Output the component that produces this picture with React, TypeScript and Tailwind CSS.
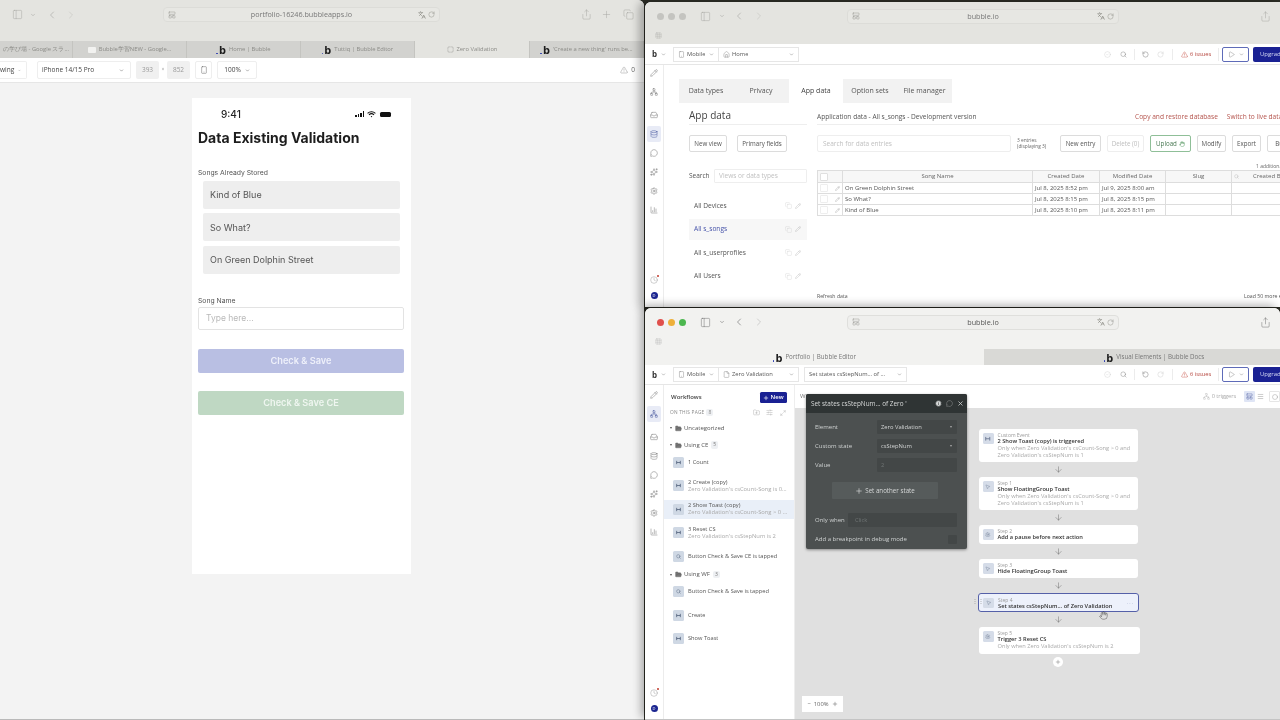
import type { ComponentType, ReactNode } from "react";
import {
  ArrowDown,
  BarChart3,
  ChevronDown,
  ChevronLeft,
  ChevronRight,
  Circle,
  CircleCheck,
  Clock,
  Copy,
  Database,
  File,
  FolderOpen,
  FolderPlus,
  Hand,
  House,
  Info,
  Inbox,
  LayoutPanelTop,
  Maximize2,
  MessageCircle,
  Menu,
  Network,
  PanelLeft,
  Pencil,
  Play,
  Plus,
  RotateCcw,
  RotateCw,
  Search,
  Settings,
  Share,
  SlidersHorizontal,
  Smartphone,
  Sparkles,
  SquareDashed,
  TriangleAlert,
  MousePointer2,
  X,
  Grid3x3,
  Languages,
  type LucideIcon,
} from "lucide-react";

type GlyphProps = { size?: number; strokeWidth?: number };

function EventGlyph({ size = 6 }: GlyphProps) {
  return (
    <svg width={size} height={size} viewBox="0 0 6 6" fill="none" stroke="currentColor" strokeWidth="1">
      <path d="M.8 1v4M5.2 1v4M.8 3h4.4" />
    </svg>
  );
}

function BLogo({ size = 11 }: { size?: number }) {
  return (
    <span className="inline-flex items-end leading-none">
      <span className="mb-[1px] mr-[1px] h-[1.5px] w-[1.5px] rounded-full bg-[#2b3bb0]" />
      <span className="font-bold text-[#1c1c1c]" style={{ fontSize: size }}>
        b
      </span>
    </span>
  );
}

function UrlBar({ url, width, tone }: { url: string; width: number; tone: "idle" | "focus" }) {
  return (
    <div
      className={`flex h-[15px] items-center rounded-[4px] border px-[4px] ${
        tone === "focus" ? "border-[#dfdfdc] bg-[#efefed]" : "border-[#dcdcd8] bg-[#e7e7e3]"
      }`}
      style={{ width }}
    >
      <div className="w-[20px]">
        <LayoutPanelTop size={8} className="text-[#8a8a86]" strokeWidth={1.25} />
      </div>
      <span className={`flex-1 text-center text-[7.2px] ${tone === "focus" ? "text-[#555]" : "text-[#777]"}`}>{url}</span>
      <div className="flex w-[20px] items-center justify-end gap-[2px] text-[#77776f]">
        <Languages size={8} strokeWidth={1.5} />
        <RotateCw size={7} strokeWidth={1.25} />
      </div>
    </div>
  );
}

function SideRail({ active, top, bottom }: { active: number; top: number; bottom: number }) {
  const icons: LucideIcon[] = [Pencil, Network, Inbox, Database, MessageCircle, Sparkles, Settings, BarChart3];
  return (
    <div
      className="flex w-[19px] shrink-0 flex-col items-center justify-between border-r border-[#ececec] bg-white"
      style={{ paddingTop: top, paddingBottom: bottom }}
    >
      <div className="flex flex-col items-center">
        {icons.map((Icon, i) => (
          <div
            key={i}
            className={`flex h-[16px] w-[14px] items-center justify-center rounded-[2px] ${
              i === active ? "bg-[#e8ebf6] text-[#3f4f9a]" : "text-[#6b6b6b]"
            } ${i === 1 ? "mb-[7px]" : "mb-[3px]"}`}
          >
            <Icon size={8} strokeWidth={1.4} />
          </div>
        ))}
      </div>
      <div className="flex flex-col items-center gap-[8px]">
        <div className="relative text-[#8b8b8b]">
          <Clock size={8} strokeWidth={1.2} />
          <span className="absolute right-[-1px] top-[-1px] h-[2px] w-[2px] rounded-full bg-[#c0392b]" />
        </div>
        <div className="flex h-[7px] w-[7px] items-center justify-center rounded-full bg-[#1b2590] text-[4px] text-white">
          D
        </div>
      </div>
    </div>
  );
}

function EditorTopBar({ children, height }: { children: ReactNode; height: number }) {
  return (
    <div
      className="flex shrink-0 items-center border-b border-[#e6e6e6] bg-white pl-[7px]"
      style={{ height }}
    >
      <span className="w-[9px] text-[8px] font-bold text-[#333]">b</span>
      <ChevronDown size={5} className="text-[#666]" />
      <div className="ml-[7px] flex min-w-0 items-center">{children}</div>
      <div className="ml-auto flex shrink-0 items-center text-[#a0a0a0]">
        <CircleCheck size={7} strokeWidth={1.2} className="text-[#c9c9c9]" />
        <Search size={7} strokeWidth={1.4} className="ml-[9px] text-[#777]" />
        <div className="ml-[7px] h-[11px] w-px bg-[#ececec]" />
        <RotateCcw size={7} strokeWidth={1.4} className="ml-[7px] text-[#666]" />
        <RotateCw size={7} strokeWidth={1.4} className="ml-[8px] text-[#c9c9c9]" />
        <div className="ml-[8px] h-[11px] w-px bg-[#ececec]" />
        <TriangleAlert size={7} strokeWidth={1.3} className="ml-[8px] text-[#c0392b]" />
        <span className="ml-[2px] w-[23px] text-[5.8px] text-[#b4433b]">6 issues</span>
        <div className="ml-[5px] h-[13px] w-px bg-[#ececec]" />
        <div className="ml-[3px] flex h-[15px] w-[27px] items-center justify-center gap-[4px] rounded-[2px] border border-[#5e6bb8] text-[#666]">
          <Play size={7} strokeWidth={1.2} />
          <ChevronDown size={5} />
        </div>
        <div className="ml-[4px] flex h-[15px] w-[27px] items-center overflow-hidden whitespace-nowrap rounded-l-[2px] bg-[#1a2193] pl-[7px] text-[6px] font-medium text-[#d6daf5]">
          Upgrade
        </div>
      </div>
    </div>
  );
}

function SelectBox({ icon: Icon, label, width }: { icon?: LucideIcon; label: string; width: number }) {
  return (
    <div
      className="flex h-[15px] items-center border-y border-r border-[#e6e6e6] px-[4px] first:border-l"
      style={{ width }}
    >
      {Icon ? <Icon size={7} strokeWidth={1.2} className="mr-[2px] shrink-0 text-[#666]" /> : null}
      <span className="truncate text-[5.8px] text-[#555]">{label}</span>
      <ChevronDown size={5} className="ml-auto shrink-0 text-[#666]" />
    </div>
  );
}

function PreviewWindow() {
  const tabs = [
    { label: "の学び場 - Google スラ…", x: 73, kind: "none" },
    { label: "Bubble学習NEW - Google…", x: 114, kind: "sheet" },
    { label: "Home | Bubble", x: 114, kind: "b" },
    { label: "Tuttiq | Bubble Editor", x: 114, kind: "b" },
    { label: "Zero Validation", x: 115, kind: "active" },
    { label: "'Create a new thing' runs be…", x: 114, kind: "b" },
  ];
  return (
    <div className="absolute left-0 top-0 flex h-[720px] w-[644px] flex-col overflow-hidden rounded-tr-[6px] border-b border-[#b9b9b9] bg-[#f3f3f3]">
      <div className="flex h-[29px] shrink-0 items-center bg-[#e4e4e0] pl-[12px] text-[#a3a39f]">
        <PanelLeft size={11} strokeWidth={1} />
        <ChevronDown size={6} className="ml-[7px]" />
        <ChevronLeft size={12} strokeWidth={1.2} className="ml-[10px]" />
        <ChevronRight size={12} strokeWidth={1.2} className="ml-[7px] text-[#c4c4c0]" />
        <div className="ml-[86px]">
          <UrlBar url="portfolio-16246.bubbleapps.io" width={277} tone="idle" />
        </div>
        <Share size={11} strokeWidth={1} className="ml-[141px]" />
        <Plus size={11} strokeWidth={1} className="ml-[9px]" />
        <Copy size={11} strokeWidth={1} className="ml-[11px]" />
      </div>
      <div className="h-[12px] shrink-0 bg-[#e4e4e0]" />
      <div className="flex h-[17px] shrink-0 bg-[#e4e4e0]">
        {tabs.map((t) => (
          <div
            key={t.label}
            className={`flex h-full items-center justify-center gap-[3px] overflow-hidden border-r border-[#c4c4c0] ${
              t.kind === "active" ? "bg-[#e4e4e0]" : "bg-[#d2d2cf]"
            }`}
            style={{ width: t.x }}
          >
            {t.kind === "sheet" ? <span className="h-[6px] w-[8px] rounded-[1px] bg-[#f2f2f0]" /> : null}
            {t.kind === "active" ? <SquareDashed size={7} className="text-[#9a9a96]" /> : null}
            {t.kind === "b" ? <BLogo size={11} /> : null}
            <span className="whitespace-nowrap text-[5.8px] text-[#8b8b87]">{t.label}</span>
          </div>
        ))}
      </div>
      <div className="flex h-[25px] shrink-0 items-center border-b border-[#e6e6e6] bg-white text-[#444]">
        <div className="flex h-[18px] w-[27px] items-center justify-end gap-[4px] rounded-r-[2px] border border-l-0 border-[#eeeeee] pr-[5px] text-[6.5px]">
          wing
          <ChevronDown size={5} />
        </div>
        <div className="ml-[10px] flex h-[18px] w-[94px] items-center justify-between rounded-[2px] border border-[#eeeeee] pl-[4px] pr-[6px] text-[6.5px]">
          iPhone 14/15 Pro
          <ChevronDown size={5} />
        </div>
        <div className="ml-[5px] flex h-[18px] w-[23px] items-center justify-center rounded-[2px] bg-[#f0f0f0] text-[6.5px] text-[#999]">
          393
        </div>
        <span className="w-[8px] text-center text-[5px] text-[#999]">×</span>
        <div className="flex h-[18px] w-[23px] items-center justify-center rounded-[2px] bg-[#f0f0f0] text-[6.5px] text-[#999]">
          852
        </div>
        <div className="ml-[5px] flex h-[18px] w-[17px] items-center justify-center rounded-[2px] border border-[#eeeeee]">
          <Smartphone size={8} strokeWidth={1.2} />
        </div>
        <div className="ml-[5px] flex h-[18px] w-[40px] items-center justify-center gap-[4px] rounded-[2px] border border-[#eeeeee] text-[6.5px]">
          100%
          <ChevronDown size={5} />
        </div>
        <TriangleAlert size={8} strokeWidth={1} className="ml-auto text-[#666]" />
        <span className="ml-[3px] mr-[9px] text-[6.5px] text-[#666]">0</span>
      </div>
      <div className="flex flex-1 pl-[192px] pt-[15px]">
        <PhoneScreen />
      </div>
    </div>
  );
}

function PhoneScreen() {
  const songs = ["Kind of Blue", "So What?", "On Green Dolphin Street"];
  return (
    <div className="flex h-[476px] w-[219px] flex-col bg-white pl-[6px] pr-[7px] font-['Inter',sans-serif] text-[#222]">
      <div className="flex h-[32px] shrink-0 items-center justify-between pl-[23px] pr-[13px]">
        <span className="text-[10px] font-medium">9:41</span>
        <div className="flex items-center gap-[3px] text-[#111]">
          <div className="flex items-end gap-[1px]">
            <span className="h-[2px] w-[1.5px] bg-[#111]" />
            <span className="h-[3px] w-[1.5px] bg-[#111]" />
            <span className="h-[4.5px] w-[1.5px] bg-[#111]" />
            <span className="h-[6px] w-[1.5px] bg-[#111]" />
          </div>
          <svg width="9" height="7" viewBox="0 0 9 7" fill="none" stroke="#111" strokeWidth="1.1">
            <path d="M.6 2.4a5.6 5.6 0 0 1 7.8 0M2 3.9a3.6 3.6 0 0 1 5 0" />
            <circle cx="4.5" cy="5.6" r=".7" fill="#111" stroke="none" />
          </svg>
          <span className="ml-[1px] h-[5px] w-[11px] rounded-[1.5px] bg-[#111]" />
        </div>
      </div>
      <h1 className="text-[14px] font-bold leading-[16px] text-[#1d1d1d]">Data Existing Validation</h1>
      <div className="mt-[23px] h-[8px] text-[6.8px] leading-[8px] text-[#555]">Songs Already Stored</div>
      <div className="mt-[4px] flex flex-col gap-[4.4px] pl-[5px] pr-[4px]">
        {songs.map((s) => (
          <div key={s} className="flex h-[28px] items-center rounded-[2px] bg-[#eeeeee] pl-[7px] pr-[2px] text-[9px] text-[#555]">
            {s}
          </div>
        ))}
      </div>
      <div className="mt-[23px] h-[8px] text-[6.8px] leading-[8px] text-[#555]">Song Name</div>
      <div className="mt-[2px] flex h-[23px] shrink-0 items-center rounded-[2px] border border-[#e3e3e3] pl-[7px] text-[8.5px] text-[#b9b9b9]">
        Type here...
      </div>
      <button type="button" className="mt-[19px] h-[24px] shrink-0 rounded-[2px] bg-[#b9bfe3] text-[9.2px] font-semibold text-[#eef0fa]">
        Check &amp; Save
      </button>
      <button type="button" className="mt-[18px] h-[24px] shrink-0 rounded-[2px] bg-[#bfd8c3] text-[9.2px] font-semibold text-[#eff6f0]">
        Check &amp; Save CE
      </button>
    </div>
  );
}

function ActionButton({ children, width, tone = "normal" }: { children: ReactNode; width: number; tone?: "normal" | "muted" | "green" }) {
  const cls =
    tone === "green"
      ? "border-[#8fbf98] text-[#4b7a55]"
      : tone === "muted"
        ? "border-[#eeeeee] text-[#bdbdbd]"
        : "border-[#dcdcdc] text-[#555]";
  return (
    <div
      className={`flex h-[17px] shrink-0 items-center justify-center gap-[2px] whitespace-nowrap rounded-[2px] border text-[6.2px] ${cls}`}
      style={{ width }}
    >
      {children}
    </div>
  );
}

function AppDataWindow() {
  const tabs = [
    { label: "Data types", w: 54 },
    { label: "Privacy", w: 56 },
    { label: "App data", w: 54, active: true },
    { label: "Option sets", w: 54 },
    { label: "File manager", w: 55 },
  ];
  const views = ["All Devices", "All s_songs", "All s_userprofiles", "All Users"];
  const rows = [
    ["On Green Dolphin Street", "Jul 8, 2025 8:52 pm", "Jul 9, 2025 8:00 am"],
    ["So What?", "Jul 8, 2025 8:15 pm", "Jul 8, 2025 8:15 pm"],
    ["Kind of Blue", "Jul 8, 2025 8:10 pm", "Jul 8, 2025 8:11 pm"],
  ];
  return (
    <div className="absolute left-[645px] top-[2px] flex h-[305px] w-[635px] flex-col overflow-hidden rounded-tl-[6px] bg-white shadow-[-6px_0_9px_rgba(0,0,0,0.28)]">
      <div className="flex h-[28px] shrink-0 items-center bg-[#e4e4e0] pl-[12px] text-[#a3a39f]">
        <div className="flex gap-[4px]">
          <span className="h-[7px] w-[7px] rounded-full bg-[#c4c4c0]" />
          <span className="h-[7px] w-[7px] rounded-full bg-[#c4c4c0]" />
          <span className="h-[7px] w-[7px] rounded-full bg-[#c4c4c0]" />
        </div>
        <PanelLeft size={11} strokeWidth={1} className="ml-[14px]" />
        <ChevronDown size={6} className="ml-[8px]" />
        <ChevronLeft size={12} strokeWidth={1.2} className="ml-[8px]" />
        <ChevronRight size={12} strokeWidth={1.2} className="ml-[8px] text-[#c4c4c0]" />
        <div className="ml-[82px]">
          <UrlBar url="bubble.io" width={272} tone="idle" />
        </div>
        <Share size={11} strokeWidth={1} className="ml-[141px]" />
      </div>
      <div className="flex h-[14px] shrink-0 items-center bg-[#e4e4e0] pb-[4px] pl-[10px] text-[#a3a39f]">
        <Grid3x3 size={7} strokeWidth={1} />
      </div>
      <EditorTopBar height={21}>
        <SelectBox icon={Smartphone} label="Mobile" width={46} />
        <SelectBox icon={House} label="Home" width={80} />
      </EditorTopBar>
      <div className="flex min-h-0 flex-1">
        <SideRail active={3} top={0} bottom={8} />
        <div className="min-w-0 flex-1 pl-[15px] pt-[14px] text-[#555]">
          <div className="flex h-[24px] w-[273px] bg-[#f2f2f2]">
            {tabs.map((t) => (
              <div
                key={t.label}
                className={`flex items-center justify-center text-[7px] ${t.active ? "bg-white text-[#444]" : "text-[#555]"}`}
                style={{ width: t.w }}
              >
                {t.label}
              </div>
            ))}
          </div>
          <div className="flex pl-[10px]">
            <div className="w-[118px] shrink-0">
              <div className="flex h-[22px] items-center border-b border-[#eeeeee] pt-[4px] text-[10px] text-[#444]">App data</div>
              <div className="mt-[10px] flex gap-[10px]">
                <ActionButton width={38}>New view</ActionButton>
                <ActionButton width={50}>Primary fields</ActionButton>
              </div>
              <div className="mt-[17px] flex h-[14px] items-center">
                <span className="w-[25px] text-[6.5px]">Search</span>
                <div className="flex h-full flex-1 items-center rounded-[1px] border border-[#eeeeee] pl-[4px] text-[6.5px] text-[#c0c0c0]">
                  Views or data types
                </div>
              </div>
              <div className="mt-[12px] flex flex-col gap-[2.6px]">
                {views.map((v, i) => (
                  <div
                    key={v}
                    className={`flex h-[21px] items-center justify-between pl-[5px] pr-[6px] text-[6.6px] ${
                      i === 1 ? "bg-[#f7f7f7] text-[#4451a8]" : "text-[#555]"
                    }`}
                  >
                    {v}
                    <div className="flex items-center gap-[3px] text-[#c9c9c9]">
                      <Copy size={7} strokeWidth={1.1} />
                      <Pencil size={6} strokeWidth={1.3} className="text-[#aaa]" />
                    </div>
                  </div>
                ))}
              </div>
            </div>
            <div className="ml-[10px] w-[480px] shrink-0">
              <div className="flex h-[22px] items-center whitespace-nowrap border-b border-[#eeeeee] pt-[6px] text-[6.6px]">
                <span className="w-[318px]">Application data - All s_songs - Development version</span>
                <span className="text-[#b4534c]">Copy and restore database</span>
                <span className="ml-[9px] text-[#b4534c]">Switch to live data</span>
              </div>
              <div className="mt-[10px] flex items-center">
                <div className="flex h-[17px] w-[194px] shrink-0 items-center rounded-[2px] border border-[#eeeeee] pl-[5px] text-[6.5px] text-[#c0c0c0]">
                  Search for data entries
                </div>
                <div className="ml-[6px] w-[43px] shrink-0 text-[4.8px] leading-[5.5px] text-[#666]">
                  3 entries
                  <br />
                  (displaying 3)
                </div>
                <ActionButton width={41}>New entry</ActionButton>
                <div className="ml-[6px]">
                  <ActionButton width={37} tone="muted">Delete (0)</ActionButton>
                </div>
                <div className="ml-[6px]">
                  <ActionButton width={41} tone="green">
                    Upload
                    <Hand size={6} strokeWidth={1.6} className="text-[#3f8a4c]" />
                  </ActionButton>
                </div>
                <div className="ml-[6px]">
                  <ActionButton width={29}>Modify</ActionButton>
                </div>
                <div className="ml-[6px]">
                  <ActionButton width={29}>Export</ActionButton>
                </div>
                <div className="ml-[6px]">
                  <ActionButton width={29}>Bulk</ActionButton>
                </div>
              </div>
              <div className="h-[18px] whitespace-nowrap pl-[439px] pt-[11px] text-[5px] leading-[6px] text-[#666]">1 additional</div>
              <div className="border border-[#dddddd] text-[6px]">
                <div className="grid h-[11px] grid-cols-[24px_190px_67px_66px_66px_1fr] bg-[#f7f7f7] text-center leading-[11px] text-[#666]">
                  <div className="flex items-center pl-[2px]">
                    <span className="h-[8px] w-[8px] rounded-[1px] border border-[#e0e0e0] bg-white" />
                  </div>
                  <div className="border-l border-[#dddddd]">Song Name</div>
                  <div className="border-l border-[#dddddd]">Created Date</div>
                  <div className="border-l border-[#dddddd]">Modified Date</div>
                  <div className="border-l border-[#dddddd]">Slug</div>
                  <div className="flex items-center border-l border-[#dddddd] pl-[2px]">
                    <Search size={5} className="text-[#bbb]" />
                    <span className="ml-[14px]">Created By</span>
                  </div>
                </div>
                {rows.map((r) => (
                  <div key={r[0]} className="grid h-[11px] grid-cols-[24px_190px_67px_66px_66px_1fr] border-t border-[#dddddd] leading-[10px] text-[#555]">
                    <div className="flex items-center justify-between px-[2px]">
                      <span className="h-[8px] w-[8px] rounded-[1px] border border-[#eeeeee] bg-white" />
                      <Pencil size={5} className="text-[#aaa]" />
                    </div>
                    <div className="border-l border-[#dddddd] pl-[2px]">{r[0]}</div>
                    <div className="border-l border-[#dddddd] pl-[2px]">{r[1]}</div>
                    <div className="border-l border-[#dddddd] pl-[2px]">{r[2]}</div>
                    <div className="border-l border-[#dddddd]" />
                    <div className="border-l border-[#dddddd]" />
                  </div>
                ))}
              </div>
              <div className="mt-[76px] flex h-[10px] items-center whitespace-nowrap text-[5.2px] text-[#555]">
                <span className="w-[427px]">Refresh data</span>
                <span>Load 50 more entries</span>
              </div>
            </div>
          </div>
        </div>
      </div>
    </div>
  );
}

function TreeFolder({ label, count, top }: { label: string; count?: number; top: number }) {
  return (
    <div className="flex h-[12px] items-center pl-[6px]" style={{ marginTop: top }}>
      <span className="h-0 w-0 border-x-[1.5px] border-t-[2px] border-x-transparent border-t-[#555]" />
      <FolderOpen size={7} strokeWidth={1.2} fill="#777" className="ml-[3px] text-[#555]" />
      <span className="ml-[2px] text-[6px] font-medium text-[#555]">{label}</span>
      {count ? <span className="ml-[3px] rounded-[2px] bg-[#eef0f3] px-[2px] text-[5px] text-[#777]">{count}</span> : null}
    </div>
  );
}

function TreeRow({ title, sub, icon = "event", selected }: { title: string; sub?: string; icon?: "event" | "search"; selected?: boolean }) {
  return (
    <div className={`mb-[4.5px] flex h-[19px] items-center pl-[9px] ${selected ? "bg-[#e9eff8]" : ""}`}>
      <div className="flex h-[11px] w-[11px] shrink-0 items-center justify-center rounded-[1.5px] bg-[#cfd8e4] text-[#56657e]">
        {icon === "search" ? <Search size={5} strokeWidth={2} /> : <EventGlyph size={5} />}
      </div>
      <div className="ml-[4px] min-w-0 leading-[7px]">
        <div className="truncate text-[5.7px] font-medium text-[#555]">{title}</div>
        {sub ? <div className="truncate text-[5.8px] text-[#a9a9a9]">{sub}</div> : null}
      </div>
    </div>
  );
}

function StepCard({
  eyebrow,
  title,
  lines,
  icon,
  selected,
  wide,
  height,
}: {
  eyebrow: string;
  title: string;
  lines?: string[];
  icon: ComponentType<GlyphProps>;
  selected?: boolean;
  wide?: boolean;
  height: number;
}) {
  const Icon = icon;
  return (
    <div
      className={`flex shrink-0 rounded-[3px] pl-[4px] pt-[4px] ${wide ? "w-[161px]" : "w-[159.5px]"} ${
        selected ? "-ml-[0.5px] border border-[#5560a8] bg-[#edf1fb]" : "bg-white"
      }`}
      style={{ height }}
    >
      <div className="flex h-[10.5px] w-[11px] shrink-0 items-center justify-center rounded-[1.5px] bg-[#d5dce8] text-[#6c7a93]">
        <Icon size={5.5} strokeWidth={1.5} />
      </div>
      <div className="ml-[4px] min-w-0 flex-1 leading-[7px]">
        <div className="text-[5px] leading-[5px] text-[#9a9a9a]">{eyebrow}</div>
        <div className="whitespace-nowrap text-[5.7px] font-semibold leading-[6.5px] text-[#333]">{title}</div>
        {lines?.map((l) => (
          <div key={l} className="whitespace-nowrap text-[5.7px] text-[#aaaaaa]">
            {l}
          </div>
        ))}
      </div>
      {selected ? <span className="mr-[4px] mt-[2px] text-[5px] tracking-[1px] text-[#9aa3c5]">···</span> : null}
    </div>
  );
}

function StepArrow({ height = 15 }: { height?: number }) {
  return (
    <div className="flex w-[159.5px] shrink-0 items-center justify-center text-[#555]" style={{ height }}>
      <ArrowDown size={9} strokeWidth={1.1} />
    </div>
  );
}

function DarkField({ label, value, faded }: { label: string; value: string; faded?: boolean }) {
  return (
    <div className="mb-[5px] flex h-[14px] items-center pl-[9px] pr-[10px]">
      <span className="w-[62px] text-[6px] text-[#cfd2d2]">{label}</span>
      <div className="flex h-full flex-1 items-center justify-between rounded-[1px] bg-[#434747] pl-[4px] pr-[5px]">
        <span className={`text-[5.8px] ${faded ? "text-[#6f7474]" : "text-[#d4d6d6]"}`}>{value}</span>
        {faded ? null : <span className="h-0 w-0 border-x-[1.5px] border-t-[2px] border-x-transparent border-t-[#aaa]" />}
      </div>
    </div>
  );
}

function WorkflowWindow() {
  return (
    <div className="absolute left-[645px] top-[308px] flex h-[412px] w-[635px] flex-col overflow-hidden rounded-t-[6px] border-b border-[#c4c4c4] bg-white shadow-[-4px_-3px_8px_rgba(0,0,0,0.3)]">
      <div className="flex h-[28px] shrink-0 items-center bg-[#f2f2f0] pl-[12px] text-[#666]">
        <div className="flex gap-[4px]">
          <span className="h-[7px] w-[7px] rounded-full bg-[#e0504c]" />
          <span className="h-[7px] w-[7px] rounded-full bg-[#eeb03a]" />
          <span className="h-[7px] w-[7px] rounded-full bg-[#4cb74f]" />
        </div>
        <PanelLeft size={11} strokeWidth={1} className="ml-[14px]" />
        <ChevronDown size={6} className="ml-[8px]" />
        <ChevronLeft size={12} strokeWidth={1.2} className="ml-[8px]" />
        <ChevronRight size={12} strokeWidth={1.2} className="ml-[8px] text-[#b5b5b5]" />
        <div className="ml-[82px]">
          <UrlBar url="bubble.io" width={272} tone="focus" />
        </div>
        <Share size={11} strokeWidth={1} className="ml-[141px]" />
      </div>
      <div className="flex h-[13px] shrink-0 items-center bg-[#f2f2f0] pb-[2px] pl-[10px] text-[#aaa]">
        <Grid3x3 size={7} strokeWidth={1} />
      </div>
      <div className="flex h-[16px] shrink-0 overflow-hidden">
        <div className="flex w-[339px] shrink-0 items-center justify-center gap-[3px] bg-[#f2f2f0]">
          <BLogo size={11} />
          <span className="text-[6.2px] text-[#777]">Portfolio | Bubble Editor</span>
        </div>
        <div className="flex w-[340px] shrink-0 items-center justify-center gap-[3px] bg-[#d9d9d6]">
          <BLogo size={11} />
          <span className="text-[6.2px] text-[#777]">Visual Elements | Bubble Docs</span>
        </div>
      </div>
      <EditorTopBar height={20}>
        <SelectBox icon={Smartphone} label="Mobile" width={46} />
        <SelectBox icon={File} label="Zero Validation" width={80} />
        <div className="ml-[5px]">
          <SelectBox label="Set states csStepNum... of ..." width={103} />
        </div>
      </EditorTopBar>
      <div className="relative flex min-h-0 flex-1">
        <SideRail active={1} top={2} bottom={7} />
        <div className="w-[131px] shrink-0 border-r border-[#eeeeee] bg-white">
          <div className="flex items-center pl-[7px] pr-[7px] pt-[7px]">
            <span className="text-[6px] font-semibold text-[#444]">Workflows</span>
            <div className="ml-auto flex h-[11px] w-[27px] items-center justify-center gap-[1px] rounded-[1.5px] bg-[#1a2193] text-[6px] font-semibold text-white">
              <Plus size={6} strokeWidth={2.5} />
              New
            </div>
          </div>
          <div className="mt-[4px] flex h-[11px] items-center pl-[6px] pr-[8px] text-[#8a8a8a]">
            <span className="text-[4.8px] tracking-[0.2px]">ON THIS PAGE</span>
            <span className="ml-[2px] rounded-[2px] bg-[#eef0f3] px-[2px] text-[5px]">8</span>
            <FolderPlus size={7} strokeWidth={1.1} className="ml-auto" />
            <SlidersHorizontal size={7} strokeWidth={1.1} className="ml-[6px]" />
            <Maximize2 size={6} strokeWidth={1.1} className="ml-[7px]" />
          </div>
          <TreeFolder label="Uncategorized" top={4} />
          <TreeFolder label="Using CE" count={5} top={5} />
          <div className="mt-[1.5px]">
            <TreeRow title="1 Count" />
            <TreeRow title="2 Create (copy)" sub="Zero Validation's csCount-Song is 0..." />
            <TreeRow title="2 Show Toast (copy)" sub="Zero Validation's csCount-Song > 0 ..." selected />
            <TreeRow title="3 Reset CS" sub="Zero Validation's csStepNum is 2" />
            <div className="-mb-[1.5px]">
              <TreeRow title="Button Check & Save CE is tapped" icon="search" />
            </div>
          </div>
          <TreeFolder label="Using WF" count={3} top={0} />
          <div className="mt-[1.5px]">
            <TreeRow title="Button Check & Save is tapped" icon="search" />
            <TreeRow title="Create" />
            <TreeRow title="Show Toast" />
          </div>
        </div>
        <div className="flex min-w-0 flex-1 flex-col">
          <div className="flex h-[23px] shrink-0 items-center whitespace-nowrap bg-white pl-[5px] text-[#a9a9a9]">
            <span className="w-[6px] text-[6px] text-[#777]">W</span>
            <Network size={7} strokeWidth={1.1} className="ml-[397px] shrink-0" />
            <span className="ml-[2px] w-[27px] text-[5.6px]">0 triggers</span>
            <div className="ml-[7px] flex h-[11px] w-[11px] shrink-0 items-center justify-center rounded-[1px] bg-[#dfe5f5] text-[#3f4f9a]">
              <LayoutPanelTop size={7} strokeWidth={1.3} />
            </div>
            <Menu size={7} strokeWidth={1.3} className="ml-[2px] shrink-0 text-[#777]" />
            <div className="ml-[5px] flex h-[11px] w-[11px] shrink-0 items-center justify-center rounded-[1px] border border-[#e6e6e6] text-[#777]">
              <Circle size={6} strokeWidth={1.3} />
            </div>
          </div>
          <div className="flex min-h-0 flex-1 flex-col bg-[#e0e0e0] pl-[183.5px] pt-[21px]">
            <StepCard
              height={33}
              icon={EventGlyph}
              eyebrow="Custom Event"
              title="2 Show Toast (copy) is triggered"
              lines={["Only when Zero Validation's csCount-Song > 0 and", "Zero Validation's csStepNum is 1"]}
            />
            <StepArrow />
            <StepCard
              height={33}
              icon={MousePointer2}
              eyebrow="Step 1"
              title="Show FloatingGroup Toast"
              lines={["Only when Zero Validation's csCount-Song > 0 and", "Zero Validation's csStepNum is 1"]}
            />
            <StepArrow />
            <StepCard height={19} icon={Settings} eyebrow="Step 2" title="Add a pause before next action" />
            <StepArrow />
            <StepCard height={19} icon={MousePointer2} eyebrow="Step 3" title="Hide FloatingGroup Toast" />
            <StepArrow height={14.5} />
            <StepCard height={19.5} selected wide icon={MousePointer2} eyebrow="Step 4" title="Set states csStepNum... of Zero Validation" />
            <StepArrow />
            <StepCard
              height={27}
              wide
              icon={Settings}
              eyebrow="Step 5"
              title="Trigger 3 Reset CS"
              lines={["Only when Zero Validation's csStepNum is 2"]}
            />
            <div className="mt-[3px] flex w-[159.5px] justify-center">
              <div className="flex h-[10px] w-[10px] items-center justify-center rounded-full bg-white text-[#555]">
                <Plus size={6} strokeWidth={1.5} />
              </div>
            </div>
          </div>
        </div>

        {/* floating property editor */}
        <div className="absolute left-[161px] top-[9px] h-[155px] w-[161px] rounded-[2px] bg-[#4c5050] shadow-[0_1px_3px_rgba(0,0,0,0.4)]">
          <div className="flex h-[19px] items-center rounded-t-[2px] bg-[#2f3434] pl-[5px] pr-[3px] text-[#d8dada]">
            <span className="text-[6.4px]">Set states csStepNum... of Zero '</span>
            <Info size={7} fill="#d8dada" stroke="#2f3434" className="ml-auto" />
            <MessageCircle size={7} strokeWidth={1} className="ml-[4px]" />
            <X size={7} strokeWidth={2.5} className="ml-[4px]" />
          </div>
          <div className="pt-[7px]">
            <DarkField label="Element" value="Zero Validation" />
            <DarkField label="Custom state" value="csStepNum" />
            <DarkField label="Value" value="2" faded />
          </div>
          <div className="ml-[26px] mt-[10px] flex h-[17px] w-[106px] items-center justify-center gap-[2px] rounded-[1px] bg-[#565b5b] text-[6.2px] text-[#d4d6d6]">
            <Plus size={8} strokeWidth={2} />
            Set another state
          </div>
          <div className="mt-[14px] flex h-[14px] items-center pl-[9px] pr-[10px]">
            <span className="w-[33px] text-[6px] text-[#cfd2d2]">Only when</span>
            <div className="flex h-full flex-1 items-center rounded-[1px] bg-[#434747] pl-[7px] text-[5.8px] text-[#6f7474]">Click</div>
          </div>
          <div className="mt-[5px] flex h-[14px] items-center pl-[9px] pr-[10px]">
            <span className="text-[6px] text-[#cfd2d2]">Add a breakpoint in debug mode</span>
            <span className="ml-auto h-[9px] w-[9px] rounded-[1px] bg-[#434747]" />
          </div>
        </div>

        <div className="absolute bottom-[7px] left-[157px] flex h-[16px] w-[41px] items-center justify-center gap-[3px] bg-white text-[5.8px] text-[#666]">
          <span>−</span>
          <span>100%</span>
          <Plus size={6} />
        </div>
        <div className="absolute left-[327px] top-[215px] text-[6px] leading-[3px] text-[#999]">⋮⋮</div>
        <Hand size={9} strokeWidth={1.1} className="absolute left-[454px] top-[226px] text-[#333]" />
      </div>
    </div>
  );
}

export default function App() {
  return (
    <div className="relative h-[720px] w-[1280px] overflow-hidden bg-[#2c2d26] font-['Open_Sans',sans-serif] blur-[0.35px]">
      <PreviewWindow />
      <AppDataWindow />
      <WorkflowWindow />
    </div>
  );
}
